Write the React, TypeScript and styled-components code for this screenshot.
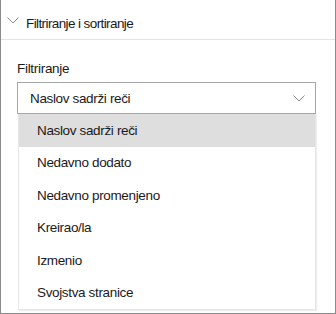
import styled, { createGlobalStyle } from 'styled-components'

const Global = createGlobalStyle`
  html, body { margin: 0; padding: 0; background: #ffffff; }
  body { font-family: "Liberation Sans", Arial, sans-serif; color: #1b1a19; }
`

const Frame = styled.div`
  width: 336px;
  height: 314px;
  box-sizing: border-box;
  border: 1px solid #8a8a8a;
  border-top: none;
  display: flex;
  flex-direction: column;
  overflow: hidden;
`

const Header = styled.div`
  height: 40px;
  box-sizing: border-box;
  border-bottom: 1px solid #e3e3e3;
  display: flex;
  align-items: center;
  padding: 8px 0 0 6px;
  gap: 7px;
`

const HeaderIcon = styled.span`
  display: flex;
  margin-bottom: 7px;
`

const HeaderTitle = styled.span`
  font-size: 13.5px;
  letter-spacing: -0.6px;
`

const Body = styled.div`
  padding: 20px 19px 0 16px;
  display: flex;
  flex-direction: column;
`

const Label = styled.div`
  font-size: 13.5px;
  letter-spacing: -0.3px;
  line-height: 18px;
  margin-bottom: 4px;
`

const Select = styled.div`
  height: 32px;
  box-sizing: border-box;
  border: 1px solid #a6a6a6;
  display: flex;
  align-items: center;
  justify-content: space-between;
  padding: 0 10px 0 12px;
  font-size: 13.5px;
  letter-spacing: -0.35px;
`

const Menu = styled.ul`
  list-style: none;
  margin: 0 0 0 1px;
  padding: 0;
  border: 1px solid #e6e6e6;
  border-top: none;
  box-shadow: 1px 1px 1px #eeeeee;
`

const Item = styled.li<{ $active?: boolean }>`
  height: 32.5px;
  display: flex;
  align-items: center;
  padding-left: 18px;
  font-size: 13.5px;
  letter-spacing: -0.35px;
  background: ${({ $active }) => ($active ? '#dedede' : '#ffffff')};
`

const Chevron = ({ w = 12 }: { w?: number }) => (
  <svg width={w} height={w / 2 + 1} viewBox="0 0 12 7">
    <path d="M0.5 0.5 L6 6 L11.5 0.5" fill="none" stroke="#8a8a8a" strokeWidth="1" />
  </svg>
)

const items = [
  'Naslov sadrži reči',
  'Nedavno dodato',
  'Nedavno promenjeno',
  'Kreirao/la',
  'Izmenio',
  'Svojstva stranice',
]

export default function App() {
  return (
    <>
      <Global />
      <Frame>
        <Header>
          <HeaderIcon>
            <Chevron />
          </HeaderIcon>
          <HeaderTitle>Filtriranje i sortiranje</HeaderTitle>
        </Header>
        <Body>
          <Label>Filtriranje</Label>
          <Select>
            <span>Naslov sadrži reči</span>
            <Chevron />
          </Select>
          <Menu>
            {items.map((t, i) => (
              <Item key={t} $active={i === 0}>{t}</Item>
            ))}
          </Menu>
        </Body>
      </Frame>
    </>
  )
}
